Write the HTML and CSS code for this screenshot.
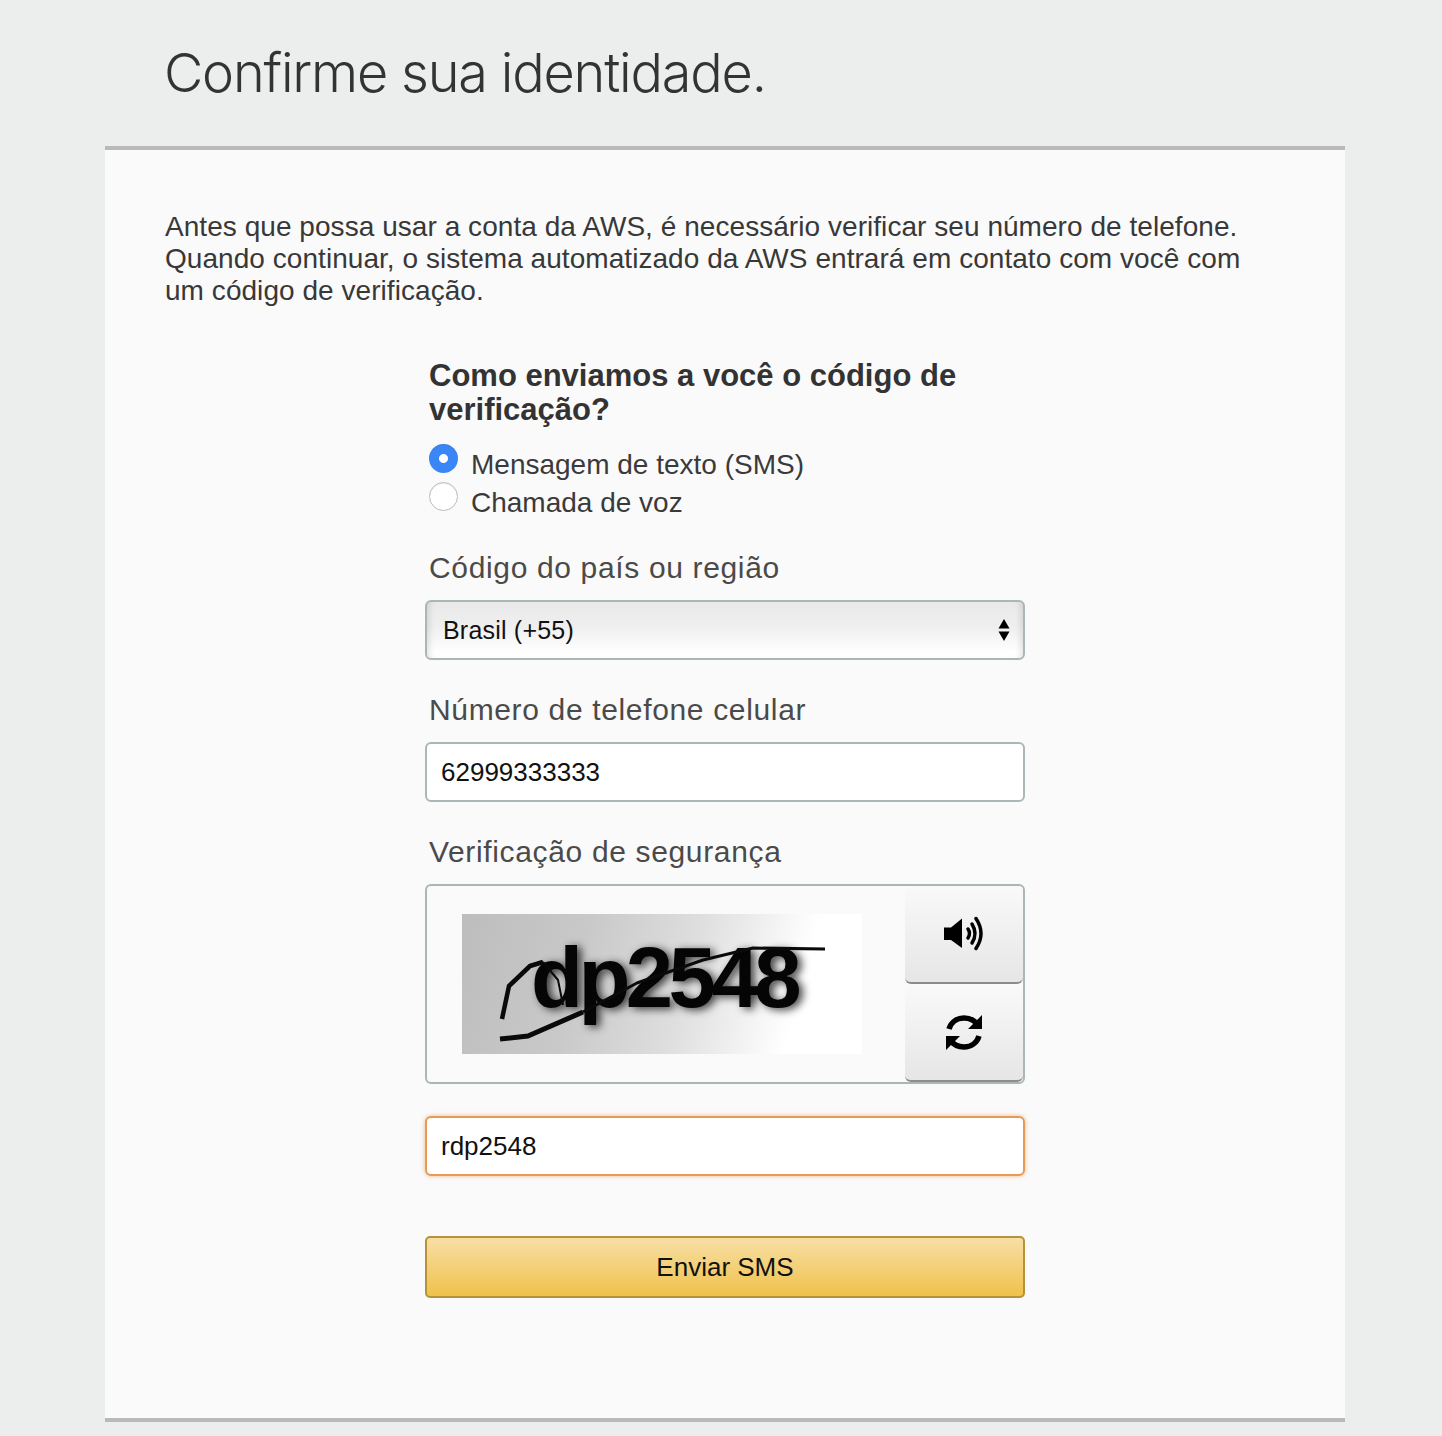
FILE: index.html
```html
<!DOCTYPE html>
<html lang="pt-BR">
<head>
<meta charset="utf-8">
<title>Confirme sua identidade</title>
<link rel="stylesheet" href="styles.css">
</head>
<body>
<header class="page-head"><h1>Confirme sua identidade.</h1></header>
<main class="card">
  <p class="intro">Antes que possa usar a conta da AWS, é necessário verificar seu número de telefone.<br>Quando continuar, o sistema automatizado da AWS entrará em contato com você com<br>um código de verificação.</p>
  <form class="form">
    <h2>Como enviamos a você o código de<br>verificação?</h2>
    <div class="radios">
      <div class="radio-row"><span class="radio on"></span><span>Mensagem de texto (SMS)</span></div>
      <div class="radio-row"><span class="radio"></span><span>Chamada de voz</span></div>
    </div>
    <div class="label first">Código do país ou região</div>
    <div class="select"><span>Brasil (+55)</span>
      <svg width="12" height="24" viewBox="0 0 12 24"><path d="M6 1 11.500 10.500H.5zM.5 13.500h11L6 23z"/></svg>
    </div>
    <div class="label">Número de telefone celular</div>
    <div class="input">62999333333</div>
    <div class="label">Verificação de segurança</div>
    <div class="captcha">
      <div class="captcha-img">
        <span class="captcha-text">dp2548</span>
        <svg class="captcha-lines" width="400" height="140" viewBox="0 0 400 140" fill="none" stroke="#0a0a0a" stroke-linejoin="round"><path stroke-width="4.500" d="M40 105 47 72 68 52 81 48"/><path stroke-width="2" d="M81 48 96 66 101 91"/><path stroke-width="5" d="M38 125 66 122 121 98"/><path stroke-width="3" d="M121 98 175 69 241 46 291 34 363 35"/></svg>
      </div>
      <div class="captcha-btns">
        <div class="icon-btn">
          <svg width="40" height="35" viewBox="0 0 40 35"><path d="M0 11.500h7L18 2.500V32L7 24H0z"/><g fill="none" stroke="#000" stroke-width="3.500" stroke-linecap="round"><path d="M24 13q3 4.500 0 9"/><path d="M28 8q6 9.500 0 19"/><path d="M32 2.500q10 15 0 30"/></g></svg>
        </div>
        <div class="icon-btn second">
          <svg width="38" height="37" viewBox="0 0 38 37"><g fill="none" stroke="#000" stroke-width="5.500"><path d="M4 15C6 8 12 4 19 4c6 0 11 3 14 7"/><path d="M34 22c-2 7-8 11-15 11-6 0-11-3-14-7"/></g><path d="M37 1V15H23zM1 36V22H15z"/></svg>
        </div>
      </div>
    </div>
    <div class="input focus">rdp2548</div>
    <button class="submit" type="button">Enviar SMS</button>
  </form>
</main>
</body>
</html>
```
FILE: styles.css
```css
* { box-sizing: border-box; }
html, body { margin: 0; }
body {
  height: 1436px;
  overflow: hidden;
  background: #eceeee;
  color: #333;
  font-family: "Liberation Sans", Arial, sans-serif;
}
.page-head { height: 146px; padding: 40px 0 0 164px; }
h1 {
  margin: 0;
  font-family: Inter, "Liberation Sans", sans-serif;
  font-size: 54px;
  line-height: 66px;
  font-weight: 300;
  letter-spacing: -1.2px;
  color: #333;
}
.card {
  width: 1240px;
  height: 1276px;
  margin-left: 105px;
  padding: 61px 60px 0;
  background: #fafafa;
  border-top: 4px solid #b9b9b9;
  border-bottom: 4px solid #b9b9b9;
}
.intro { margin: 0; font-size: 28px; line-height: 32px; white-space: nowrap; letter-spacing: .05px; color: #383838; }
.form { width: 600px; margin: 52px 0 0 260px; }
h2 { margin: 0 0 0 4px; font-size: 31px; line-height: 34px; font-weight: 700; }
.radios { margin: 17px 0 0 4px; font-size: 28px; color: #3a3a3a; }
.radio-row { display: flex; gap: 13px; height: 38px; align-items: flex-start; line-height: 42px; }
.radio {
  flex: none;
  width: 29px;
  height: 29px;
  border-radius: 50%;
  background: #fff;
  border: 1px solid #bbb;
  box-shadow: inset 0 1px 1px rgba(0,0,0,.08);
}
.radio.on {
  border: 0;
  background: radial-gradient(circle, #fff 0 4px, #3b86f7 5px);
}
.label {
  margin: 29px 0 0 4px;
  height: 40px;
  font-size: 30px;
  line-height: 42px;
  letter-spacing: .65px;
  color: #4a4a4a;
}
.label.first { margin-top: 27px; }
.select, .input, .captcha { border: 2px solid #aab7b8; border-radius: 6px; }
.select {
  display: flex;
  align-items: center;
  justify-content: space-between;
  height: 60px;
  margin-top: 13px;
  padding: 0 13px 0 16px;
  font-size: 25px;
  letter-spacing: .2px;
  color: #111;
  background: linear-gradient(#e9e9e9, #efefef 45%, #fff 90%);
  box-shadow: inset 8px 0 6px -6px rgba(0,0,0,.12), inset -8px 0 6px -6px rgba(0,0,0,.12);
}
.input {
  height: 60px;
  margin-top: 13px;
  padding: 0 14px;
  font-size: 26px;
  line-height: 56px;
  color: #111;
  background: #fff;
}
.captcha {
  display: flex;
  height: 200px;
  margin-top: 13px;
  background: #fafafa;
}
.captcha-img {
  position: relative;
  flex: none;
  width: 400px;
  height: 140px;
  margin: 28px 0 0 35px;
  overflow: hidden;
  background: linear-gradient(105deg, #bdbdbd 0%, #c9c9c9 30%, #dedede 55%, #fff 82%);
}
.captcha-text {
  position: absolute;
  left: 69px;
  top: 14px;
  font-size: 85px;
  font-weight: 700;
  line-height: 100px;
  letter-spacing: -4.5px;
  color: #050505;
  text-shadow: 4px 2px 9px rgba(0,0,0,.75);
}
.captcha-lines { position: absolute; inset: 0; }
.captcha-btns { display: flex; flex-direction: column; gap: 2px; flex: none; width: 118px; margin-left: 43px; }
.icon-btn {
  flex: none;
  display: flex;
  align-items: center;
  justify-content: center;
  height: 98px;
  padding-bottom: 2px;
  border-radius: 6px;
  border-bottom: 2px solid #8c8c8c;
  background: linear-gradient(#f9f9f9, #e6e6e6);
}
.icon-btn.second { height: 96px; }
.input.focus {
  margin-top: 32px;
  border-color: #e59a55;
  box-shadow: 0 0 4px rgba(228,121,17,.5);
}
.submit {
  display: block;
  width: 100%;
  height: 62px;
  margin-top: 60px;
  border: 2px solid #b8923a;
  border-radius: 5px;
  background: linear-gradient(#f7dfa5, #f0c14b);
  font-family: inherit;
  font-size: 26px;
  color: #111;
}
```
